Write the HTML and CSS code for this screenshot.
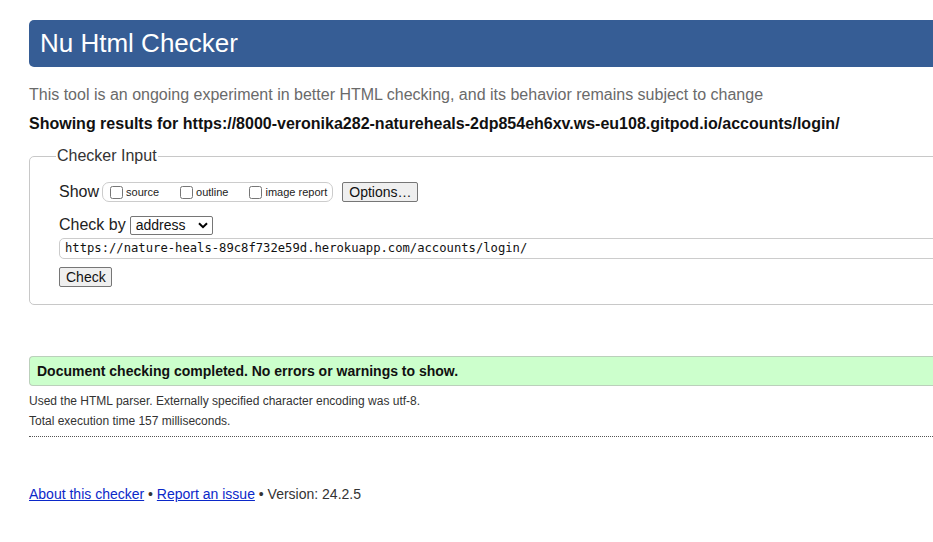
FILE: index.html
```html
<!DOCTYPE html>
<html lang="en">
<head>
<meta charset="utf-8">
<title>Showing results for login - Nu Html Checker</title>
<link rel="stylesheet" href="styles.css">
</head>
<body>
<div class="page">
  <h1 class="banner">Nu Html Checker</h1>
  <p class="intro">This tool is an ongoing experiment in better HTML checking, and its behavior remains subject to change</p>
  <p class="showing">Showing results for https://8000-veronika282-natureheals-2dp854eh6xv.ws-eu108.gitpod.io/accounts/login/</p>
  <fieldset class="input-box">
    <legend class="legend">Checker Input</legend>
    <div class="row show-row">
      <span class="label">Show</span>
      <span class="opts">
        <label class="opt"><input type="checkbox" class="cb">source</label>
        <label class="opt"><input type="checkbox" class="cb">outline</label>
        <label class="opt last"><input type="checkbox" class="cb">image report</label>
      </span>
      <button class="btn options">Options…</button>
    </div>
    <div class="row by-row">
      <span class="label">Check by</span>
      <span class="select">address<svg class="chev" width="10" height="7" viewBox="0 0 10 7"><path d="M1 1.2 5 5.2 9 1.2" fill="none" stroke="#000" stroke-width="2"/></svg></span>
    </div>
    <div class="url">https://nature-heals-89c8f732e59d.herokuapp.com/accounts/login/</div>
    <button class="btn check">Check</button>
  </fieldset>
  <div class="success">Document checking completed. No errors or warnings to show.</div>
  <p class="meta">Used the HTML parser. Externally specified character encoding was utf-8.</p>
  <p class="meta">Total execution time 157 milliseconds.</p>
  <hr class="dots">
  <p class="footer"><a href="#">About this checker</a> • <a href="#">Report an issue</a> • Version: 24.2.5</p>
</div>
</body>
</html>
```

FILE: styles.css
```css
html { overflow: hidden; }
body {
  margin: 0;
  background: #fff;
  font-family: "Liberation Sans", Arial, sans-serif;
  color: #222;
}
.page {
  width: 1400px;
  padding: 20px 0 0 29px;
}
.banner {
  margin: 0;
  height: 47px;
  line-height: 47px;
  padding-left: 11px;
  background: #365d95;
  color: #fff;
  font-size: 26px;
  font-weight: normal;
  border-radius: 5px 0 0 5px;
}
.intro {
  margin: 18px 0 0;
  font-size: 16px;
  line-height: 20px;
  color: #6a6a6a;
}
.showing {
  margin: 9px 0 0;
  font-size: 16px;
  line-height: 20px;
  font-weight: bold;
  color: #111;
}
.input-box {
  margin: 13px 0 0;
  padding: 16px 29px 17px;
  border: 1px solid #c8c8c8;
  border-radius: 5px 0 0 5px;
  min-inline-size: 0;
}
.legend {
  margin-left: -3px;
  padding: 0 1px;
  font-size: 16px;
  color: #333;
}
.row {
  display: flex;
  align-items: center;
}
.label {
  font-size: 16px;
  color: #222;
}
.show-row { height: 22px; }
.opts {
  display: flex;
  align-items: center;
  margin-left: 3px;
  height: 18px;
  padding: 0 5px 0 7px;
  border: 1px solid #ccc;
  border-radius: 7px;
}
.opt {
  display: flex;
  align-items: center;
  font-size: 11px;
  color: #222;
  margin-right: 21px;
}
.opt.last { margin-right: 0; }
.cb {
  margin: 0 3px 0 0;
  width: 13px;
  height: 13px;
}
.btn {
  font-family: "Liberation Sans", Arial, sans-serif;
  font-size: 14px;
  color: #111;
  background: #efefef;
  border: 1px solid #767676;
  border-radius: 2px;
  padding: 0 6px;
  height: 20px;
  line-height: 18px;
}
.options {
  margin-left: 9px;
  width: 76px;
}
.by-row {
  margin-top: 12px;
  height: 20px;
}
.select {
  display: flex;
  align-items: center;
  justify-content: space-between;
  box-sizing: border-box;
  width: 83px;
  height: 19px;
  margin-left: 4px;
  padding: 0 4px 0 5px;
  border: 1px solid #767676;
  border-radius: 2px;
  font-size: 14px;
  color: #111;
}
.url {
  margin-top: 3px;
  height: 21px;
  box-sizing: border-box;
  border: 1px solid #ccc;
  border-radius: 5px 0 0 5px;
  padding-left: 5px;
  font-family: "DejaVu Sans Mono", "Liberation Mono", monospace;
  font-size: 12.2px;
  line-height: 19px;
  color: #111;
}
.check {
  margin-top: 8px;
  width: 53px;
  height: 20px;
}
.success {
  margin-top: 51px;
  height: 30px;
  box-sizing: border-box;
  background: #ccffcc;
  border: 1px solid #bbd0bb;
  border-right: 0;
  border-radius: 4px 0 0 4px;
  padding-left: 7px;
  font-size: 14px;
  font-weight: bold;
  line-height: 28px;
  color: #111;
}
.meta {
  margin: 0;
  font-size: 12px;
  line-height: 20px;
  color: #333;
}
.success + .meta { margin-top: 5px; }
.dots {
  margin: 5px 0 0;
  border: 0;
  border-top: 1px dotted #555;
  height: 0;
}
.footer {
  margin: 49px 0 0;
  font-size: 14px;
  color: #333;
}
.footer a { color: #0b28c9; }
```
